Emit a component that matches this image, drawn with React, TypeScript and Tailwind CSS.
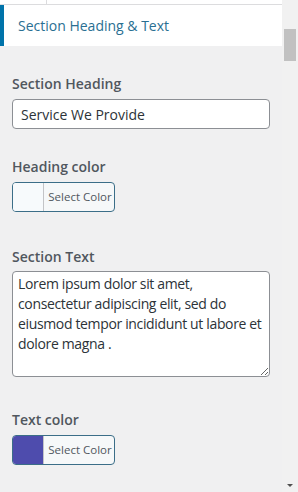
import React from "react";

function ColorButton({ swatch }: { swatch: string }) {
  return (
    <button
      type="button"
      className="flex h-[30px] w-[103px] items-stretch overflow-hidden rounded-[4px] border border-[#3b6e88] bg-[#f6f8f9] p-0"
    >
      <span className="w-[31px] border-r border-[#c3c4c7]" style={{ backgroundColor: swatch }} />
      <span className="flex flex-1 items-center justify-center pl-[2px] text-[11.5px] text-[#50575e]">
        Select Color
      </span>
    </button>
  );
}

export default function App() {
  return (
    <div
      className="flex h-[492px] w-[298px] overflow-hidden bg-[#f0f0f1]"
      style={{ fontFamily: '"Open Sans", "Noto Sans", sans-serif' }}
    >
      <div className="flex w-[282px] flex-col">
        {/* Top strip */}
        <div className="flex h-[5px] border-b border-[#dcdcde] bg-white">
          <div className="w-[47px] border-r border-[#dcdcde]" />
        </div>

        {/* Section title */}
        <div className="flex h-[41px] items-center border-l-[4px] border-[#0073aa] bg-white pl-[14px]">
          <h3 className="text-[14px] font-medium text-[#2a6f92]">Section Heading &amp; Text</h3>
        </div>

        <div className="flex flex-col px-[12px] pt-[28px]">
          <label className="mb-[5px] text-[14px] font-semibold leading-[20px] text-[#50575e]">
            Section Heading
          </label>
          <input
            type="text"
            defaultValue="Service We Provide"
            className="h-[30px] w-[258px] rounded-[4px] border border-[#8c8f94] bg-white px-[8px] text-[14px] text-[#2c3338] outline-none"
          />

          <label className="mb-[5px] mt-[28px] text-[14px] font-semibold leading-[20px] text-[#50575e]">
            Heading color
          </label>
          <ColorButton swatch="#f7fafc" />

          <label className="mb-[4px] mt-[35px] text-[14px] font-semibold leading-[20px] text-[#50575e]">
            Section Text
          </label>
          <textarea
            defaultValue="Lorem ipsum dolor sit amet, consectetur adipiscing elit, sed do eiusmod tempor incididunt ut labore et dolore magna ."
            className="h-[106px] w-[258px] resize-y rounded-[4px] border border-[#8c8f94] bg-white px-[5px] py-[2px] text-[14px] leading-[20px] tracking-[-0.35px] text-[#2c3338] outline-none"
          />

          <label className="mb-[5px] mt-[33px] text-[14px] font-semibold leading-[20px] text-[#50575e]">
            Text color
          </label>
          <ColorButton swatch="#4e4cad" />
        </div>
      </div>

      {/* Scrollbar */}
      <div className="flex w-[16px] flex-col bg-[#f1f1f1]">
        <div className="mx-[2px] mt-[29px] h-[32px] bg-[#c1c1c1]" />
        <div className="flex-1" />
        <svg width="16" height="8" viewBox="0 0 16 8" className="mb-[2px]">
          <path d="M5 2 L11 2 L8 5 Z" fill="#505050" />
        </svg>
      </div>
    </div>
  );
}
